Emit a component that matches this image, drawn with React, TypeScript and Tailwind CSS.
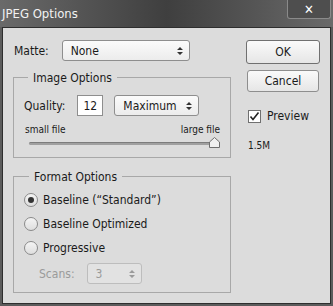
import React from "react";

const font = { fontFamily: "'DejaVu Sans Condensed', Tahoma, 'DejaVu Sans', sans-serif" };

function SelectBox({ value, w, disabled }: { value: string; w: string; disabled?: boolean }) {
  return (
    <div
      className={`${w} h-[21px] flex items-center justify-between rounded-[3px] border ${
        disabled ? "border-[#bdbdbd] bg-[#e2e2e2] text-[#9a9a9a]" : "border-[#8e8e8e] bg-gradient-to-b from-[#fbfbfb] to-[#ececec] text-[#1a1a1a]"
      } pl-[8px] pr-[6px]`}
    >
      <span>{value}</span>
      <svg width="6" height="10" viewBox="0 0 6 10">
        <path d="M0 4 L3 1 L6 4Z M0 6 L3 9 L6 6Z" fill={disabled ? "#9a9a9a" : "#333"} />
      </svg>
    </div>
  );
}

function Radio({ checked, label }: { checked?: boolean; label: string }) {
  return (
    <div className="flex items-center gap-[5px] h-[18px]">
      <div className="w-[14px] h-[14px] rounded-full border border-[#8a8a8a] bg-gradient-to-b from-[#f4f4f4] to-[#dedede] flex items-center justify-center">
        {checked && <div className="w-[6px] h-[6px] rounded-full bg-[#333]" />}
      </div>
      <span>{label}</span>
    </div>
  );
}

export default function App() {
  return (
    <div className="w-[333px] h-[306px] bg-[#5c5c5c] text-[12px] leading-[18px] text-[#1a1a1a] flex flex-col" style={font}>
      <div className="h-[27px] relative bg-gradient-to-r from-[#6a6a6a] via-[#3f3f3f] to-[#6a6a6a] flex items-center pl-[2px]">
        <span className="text-[#f2f2f2] text-[13px]">JPEG Options</span>
        <div className="absolute right-[2px] top-0 w-[44px] h-[19px] border border-[#8a8a8a] border-t-0 rounded-b-[3px] bg-[#4e4e4e] flex items-center justify-center">
          <span className="text-white font-bold text-[13px] leading-none">✕</span>
        </div>
      </div>
      <div className="flex-1 mx-[2px] mb-[2px] border border-[#2e2e2e] bg-[#dcdcdc] flex px-[10px] pt-[12px]">
        <div className="w-[220px] flex flex-col">
          <div className="flex items-center gap-[12px] pl-[1px]">
            <span>Matte:</span>
            <div className="ml-[1px]"><SelectBox value="None" w="w-[128px]" /></div>
          </div>
          <div className="mt-[16px] border border-[#a8a8a8] h-[81px] relative px-[10px] pt-[17px]">
            <span className="absolute -top-[9px] left-[14px] bg-[#dcdcdc] px-[5px]">Image Options</span>
            <div className="flex items-center">
              <span>Quality:</span>
              <div className="ml-[12px] w-[26px] h-[21px] border border-[#8e8e8e] bg-white flex items-center justify-center">12</div>
              <div className="ml-[11px]"><SelectBox value="Maximum" w="w-[85px]" /></div>
            </div>
            <div className="flex justify-between mt-[7px] text-[10px] leading-[14px] pl-[1px] pr-[0px]">
              <span>small file</span>
              <span>large file</span>
            </div>
            <div className="relative h-[8px] mt-[3px] mx-[5px]">
              <div className="absolute left-0 right-0 top-[2px] h-[3px] rounded bg-[#a0a0a0] border-t border-[#7c7c7c]" />
              <svg className="absolute right-[-5px] -top-[3px]" width="11" height="11" viewBox="0 0 11 11">
                <path d="M0.5 10.5 V5 L5.5 0.5 L10.5 5 V10.5 Z" fill="#f0f0f0" stroke="#6e6e6e" />
              </svg>
            </div>
          </div>
          <div className="mt-[18px] border border-[#a8a8a8] h-[117px] relative px-[10px] pt-[14px] flex flex-col gap-[6px]">
            <span className="absolute -top-[9px] left-[15px] bg-[#dcdcdc] px-[5px]">Format Options</span>
            <Radio checked label={"Baseline (\u201CStandard\u201D)"} />
            <Radio label="Baseline Optimized" />
            <Radio label="Progressive" />
            <div className="flex items-center pl-[15px] text-[#9a9a9a]">
              <span>Scans:</span>
              <div className="ml-[12px]"><SelectBox value="3" w="w-[55px]" disabled /></div>
            </div>
          </div>
        </div>
        <div className="ml-[15px] flex flex-col items-start">
          <div className="w-[74px] h-[24px] rounded-[3px] border border-[#707070] bg-gradient-to-b from-[#fafafa] to-[#e6e6e6] flex items-center justify-center">OK</div>
          <div className="mt-[6px] ml-[1px] w-[72px] h-[22px] rounded-[3px] border border-[#8e8e8e] bg-gradient-to-b from-[#fafafa] to-[#e6e6e6] flex items-center justify-center">Cancel</div>
          <div className="mt-[15px] ml-[2px] flex items-center gap-[6px]">
            <div className="w-[13px] h-[13px] border border-[#707070] bg-white flex items-center justify-center">
              <svg width="11" height="11" viewBox="0 0 11 11"><path d="M1.5 5.5 L4 8.5 L9.5 1.5" stroke="#222" strokeWidth="1.6" fill="none" /></svg>
            </div>
            <span>Preview</span>
          </div>
          <span className="mt-[12px] ml-[2px] text-[10px]">1.5M</span>
        </div>
      </div>
    </div>
  );
}
